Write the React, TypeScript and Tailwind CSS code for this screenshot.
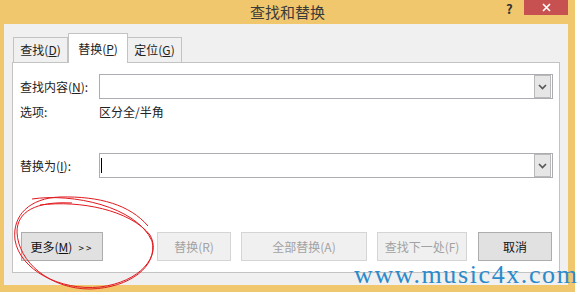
import React from 'react';

const font = { fontFamily: '"Noto Sans CJK SC", "Noto Sans", sans-serif' };

function Tab({ label, k, active }: { label: string; k: string; active?: boolean }) {
  return (
    <div
      className={
        active
          ? 'relative z-10 -mb-px flex h-[30px] w-[60px] items-center justify-center border border-b-0 border-[#c3c3c3] bg-white text-[12px] text-[#222]'
          : 'flex h-[25px] w-[55px] items-center justify-center border border-b-0 border-[#c3c3c3] bg-[#f0f0f0] text-[12px] text-[#222] -ml-px first:ml-0'
      }
    >
      <span>
        {label}(<span className="underline">{k}</span>)
      </span>
    </div>
  );
}

function Combo({ cursor }: { cursor?: boolean }) {
  return (
    <div className="flex h-[25px] flex-1 items-center border border-[#abadb3] bg-white">
      <div className="flex-1 pl-[1px]">
        {cursor && <div className="h-[15px] w-px bg-black" />}
      </div>
      <div className="mr-px flex h-[23px] w-[17px] items-center justify-center border border-[#b9b9b9] bg-[#e6e6e6]">
        <svg width="9" height="6" viewBox="0 0 9 6">
          <path d="M1 1 L4.5 4.5 L8 1" fill="none" stroke="#555" strokeWidth="1.6" />
        </svg>
      </div>
    </div>
  );
}

function Btn({ children, w, disabled }: { children: React.ReactNode; w: string; disabled?: boolean }) {
  return (
    <div
      className={
        (disabled
          ? 'border-[#d5d5d5] bg-[#f0f0f0] text-[#a2a2a2] '
          : 'border-[#adadad] bg-[#e1e1e1] text-[#111] ') +
        'flex h-[29px] items-center justify-center border text-[12px] ' +
        w
      }
    >
      {children}
    </div>
  );
}

export default function App() {
  return (
    <div className="relative h-[295px] w-[580px] overflow-hidden bg-white" style={font}>
      <div className="flex h-[292px] w-[575px] flex-col bg-[#f0c76c]">
        {/* title bar */}
        <div className="relative flex h-[24px] shrink-0 items-center justify-center">
          <span className="text-[15px] text-[#3a3a3a] leading-none -mt-[2px]">查找和替换</span>
          <span className="absolute left-[506px] top-[2px] text-[13px] font-bold leading-none text-[#333]">?</span>
          <div className="absolute right-[7px] top-0 flex h-[15px] w-[44px] items-center justify-center bg-[#c75050]">
            <svg width="9" height="9" viewBox="0 0 9 9">
              <path d="M1 1 L8 8 M8 1 L1 8" stroke="white" strokeWidth="1.6" />
            </svg>
          </div>
        </div>

        {/* body */}
        <div className="ml-[4px] mr-[7px] flex h-[261px] shrink-0 flex-col bg-[#f0f0f0] px-[8px] pt-[9px]">
          <div className="ml-px flex h-[29px] items-end">
            <Tab label="查找" k="D" />
            <Tab label="替换" k="P" active />
            <Tab label="定位" k="G" />
          </div>

          <div className="flex h-[211px] flex-col border border-[#c3c3c3] bg-white pl-[7px] pr-[6px] pt-[11px] text-[12px] text-[#222]">
            <div className="flex items-center">
              <div className="w-[79px]">
                查找内容(<span className="underline">N</span>):
              </div>
              <Combo />
            </div>
            <div className="mt-[5px] flex h-[16px] items-center">
              <div className="w-[79px]">选项:</div>
              <div>区分全/半角</div>
            </div>
            <div className="mt-[33px] flex items-center">
              <div className="w-[79px]">
                替换为(<span className="underline">I</span>):
              </div>
              <Combo cursor />
            </div>

            <div className="mt-[54px] ml-px flex">
              <Btn w="w-[82px]">
                <span>
                  更多(<span className="underline">M</span>)
                  <span className="ml-[6px] text-[10px] tracking-[2px]">&gt;&gt;</span>
                </span>
              </Btn>
              <div className="ml-[54px]">
                <Btn w="w-[74px]" disabled>
                  替换(R)
                </Btn>
              </div>
              <div className="ml-[10px]">
                <Btn w="w-[126px]" disabled>
                  全部替换(A)
                </Btn>
              </div>
              <div className="ml-[10px]">
                <Btn w="w-[90px]" disabled>
                  查找下一处(F)
                </Btn>
              </div>
              <div className="ml-[11px]">
                <Btn w="w-[74px]">取消</Btn>
              </div>
            </div>
          </div>
        </div>
      </div>

      {/* hand-drawn circle */}
      <svg className="pointer-events-none absolute left-0 top-0" width="580" height="295" viewBox="0 0 580 295">
        <path
          d="M40 205 C80 200 130 210 150 235 C162 256 140 282 100 287 C60 291 20 270 15 240 C12 215 30 198 60 197 C100 196 130 205 148 226"
          fill="none"
          stroke="#e0191e"
          strokeWidth="1"
        />
        <path
          d="M32 199 C72 193 136 206 152 241 C158 266 130 288 90 289 C50 289 18 262 17 232 C17 212 35 201 72 203"
          fill="none"
          stroke="#e0191e"
          strokeWidth="1"
        />
      </svg>

      {/* watermark */}
      <div
        className="pointer-events-none absolute left-[354px] top-[262px] whitespace-nowrap text-[26px] leading-none tracking-[1.6px] text-[#2b8acb]"
        style={{ fontFamily: '"Liberation Serif", serif' }}
      >
        www.music4x.com
      </div>
    </div>
  );
}
